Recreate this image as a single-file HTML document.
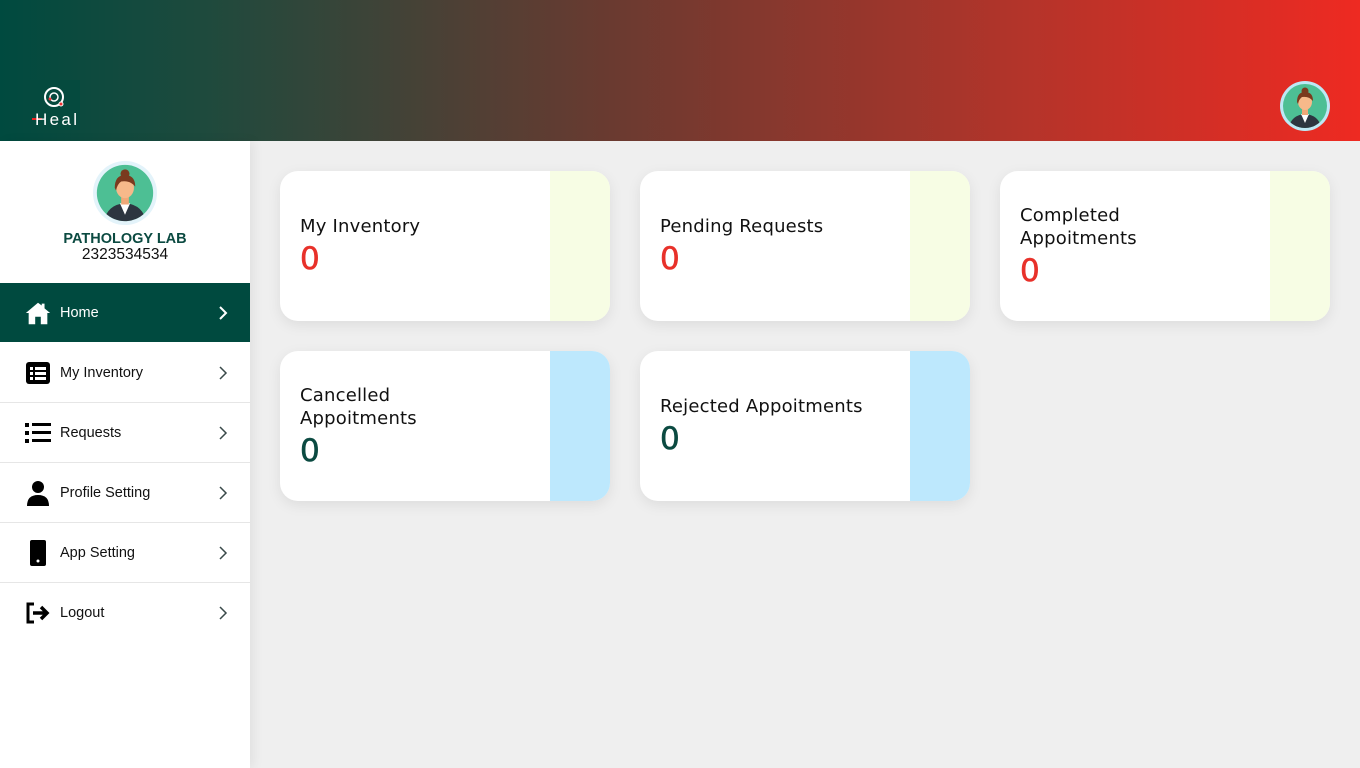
<!DOCTYPE html>
<html><head><meta charset="utf-8"><style>
*{margin:0;padding:0;box-sizing:border-box}
body{width:1360px;height:768px;overflow:hidden;background:#efefef;font-family:"Liberation Sans",sans-serif;position:relative}
.hdr{position:absolute;left:0;top:0;width:1360px;height:141px;background:linear-gradient(90deg,#004a3f 0%,#1e4a3d 15%,#6a3a30 45%,#b3342a 75%,#ee2a22 100%)}
.logo{position:absolute;left:30px;top:80px;width:50px;height:50px;background:#054a3e;color:#fff}
.side{position:absolute;left:0;top:141px;width:250px;height:627px;background:#fff;box-shadow:4px 0 10px rgba(0,0,0,.06)}
.name{position:absolute;top:90px;width:250px;text-align:center;font-weight:bold;color:#0b4a41;font-size:14.5px}
.phone{position:absolute;top:105px;width:250px;text-align:center;color:#111;font-size:15.5px}
.item{position:absolute;left:0;width:250px;height:60px;border-bottom:1px solid #e6e6e6;display:flex;align-items:center;font-size:14.5px;color:#111}
.item .ic{width:28px;height:28px;margin-left:24px;margin-right:8px;display:flex;align-items:center;justify-content:center}
.item .ch{position:absolute;right:22px;top:22px}
.card{position:absolute;width:330px;height:150px;background:#fff;border-radius:18px;overflow:hidden;box-shadow:0 4px 14px rgba(0,0,0,.08)}
.card .bar{position:absolute;right:0;top:0;width:60px;height:150px}
.card .t{position:absolute;left:20px;font-family:"DejaVu Sans",sans-serif;font-size:18px;color:#111;line-height:23px;width:240px;letter-spacing:0.2px}
.card .n{position:absolute;left:20px;font-family:"DejaVu Sans",sans-serif;font-size:31px;font-weight:normal;-webkit-text-stroke:0.6px}
</style></head><body>
<div class="hdr">
 <div class="logo">
  <svg width="50" height="50" viewBox="0 0 50 50"><circle cx="24" cy="17" r="9" fill="none" stroke="#fff" stroke-width="2"/><circle cx="24" cy="17" r="4" fill="none" stroke="#fff" stroke-width="1.5"/><circle cx="20" cy="19" r="1.5" fill="#e33"/><circle cx="31" cy="24" r="2" fill="#e33" stroke="#fff"/>
  <line x1="2" y1="39" x2="12" y2="39" stroke="#e22" stroke-width="2"/>
  <text x="5" y="45" font-family="Liberation Sans" font-size="17" fill="#fff" textLength="42">Heal</text></svg>
 </div>
 <svg style="position:absolute;left:1280px;top:81px" width="50" height="50" viewBox="0 0 50 50"><defs><clipPath id="c1"><circle cx="25" cy="25" r="22"/></clipPath></defs><circle cx="25" cy="25" r="25" fill="#bde8f5"/><circle cx="25" cy="25" r="22" fill="#4dbf94"/><g clip-path="url(#c1)"><path d="M8 50 Q10 34 25 33 Q40 34 42 50Z" fill="#2d3540"/><path d="M21 33 L25 42 L29 33Z" fill="#fff"/><rect x="22" y="26" width="6" height="8" fill="#f0a878"/><ellipse cx="25" cy="21" rx="7" ry="8" fill="#f6b98a"/><path d="M17 21 Q17 11 25 11 Q33 11 33 20 Q29 15 22 16 Q19 18 18 23Z" fill="#7a3a1e"/><circle cx="25" cy="10" r="3.5" fill="#7a3a1e"/></g></svg>
</div>
<div class="side">
 <svg style="position:absolute;left:93px;top:20px" width="64" height="64" viewBox="0 0 50 50"><defs><clipPath id="c2"><circle cx="25" cy="25" r="22"/></clipPath></defs><circle cx="25" cy="25" r="25" fill="#e3f3fa"/><circle cx="25" cy="25" r="22" fill="#4dbf94"/><g clip-path="url(#c2)"><path d="M8 50 Q10 34 25 33 Q40 34 42 50Z" fill="#2d3540"/><path d="M21 33 L25 42 L29 33Z" fill="#fff"/><rect x="22" y="26" width="6" height="8" fill="#f0a878"/><ellipse cx="25" cy="21" rx="7" ry="8" fill="#f6b98a"/><path d="M17 21 Q17 11 25 11 Q33 11 33 20 Q29 15 22 16 Q19 18 18 23Z" fill="#7a3a1e"/><circle cx="25" cy="10" r="3.5" fill="#7a3a1e"/></g></svg>
 <div class="name">PATHOLOGY LAB</div>
 <div class="phone">2323534534</div>
 <div class="item" style="top:142px;height:59px;background:#004a3f;color:#fff;border:none">
  <div class="ic"><svg width="30" height="26" viewBox="0 0 30 26"><path d="M15 2 L2 13 L5 13 L5 25 L12 25 L12 17 L18 17 L18 25 L25 25 L25 13 L28 13 L22 8 L22 3 L19 3 L19 5Z" fill="#fff"/></svg></div>Home
  <svg class="ch" width="10" height="16" viewBox="0 0 10 16"><path d="M2 2 L8 8 L2 14" fill="none" stroke="#fff" stroke-width="2"/></svg></div>
 <div class="item" style="top:202px">
  <div class="ic"><svg width="26" height="24" viewBox="0 0 26 24"><rect x="1" y="1" width="24" height="22" rx="3" fill="#000"/><rect x="5" y="6" width="3" height="3" fill="#fff"/><rect x="10" y="6" width="11" height="3" fill="#fff"/><rect x="5" y="11" width="3" height="3" fill="#fff"/><rect x="10" y="11" width="11" height="3" fill="#fff"/><rect x="5" y="16" width="3" height="3" fill="#fff"/><rect x="10" y="16" width="11" height="3" fill="#fff"/></svg></div>My Inventory
  <svg class="ch" width="10" height="16" viewBox="0 0 10 16"><path d="M2 2 L8 8 L2 14" fill="none" stroke="#3a4a4a" stroke-width="1.5"/></svg></div>
 <div class="item" style="top:262px">
  <div class="ic"><svg width="26" height="22" viewBox="0 0 26 22"><rect x="0" y="1" width="4" height="4" fill="#000"/><rect x="7" y="1" width="19" height="3" fill="#000"/><rect x="0" y="9" width="4" height="4" fill="#000"/><rect x="7" y="9" width="19" height="3" fill="#000"/><rect x="0" y="17" width="4" height="4" fill="#000"/><rect x="7" y="17" width="19" height="3" fill="#000"/></svg></div>Requests
  <svg class="ch" width="10" height="16" viewBox="0 0 10 16"><path d="M2 2 L8 8 L2 14" fill="none" stroke="#3a4a4a" stroke-width="1.5"/></svg></div>
 <div class="item" style="top:322px">
  <div class="ic"><svg width="24" height="26" viewBox="0 0 24 26"><circle cx="12" cy="7" r="6" fill="#000"/><path d="M1 26 Q1 15 12 15 Q23 15 23 26Z" fill="#000"/></svg></div>Profile Setting
  <svg class="ch" width="10" height="16" viewBox="0 0 10 16"><path d="M2 2 L8 8 L2 14" fill="none" stroke="#3a4a4a" stroke-width="1.5"/></svg></div>
 <div class="item" style="top:382px">
  <div class="ic"><svg width="18" height="26" viewBox="0 0 18 26"><rect x="1" y="0" width="16" height="26" rx="2" fill="#000"/><circle cx="9" cy="21" r="1.5" fill="#fff"/></svg></div>App Setting
  <svg class="ch" width="10" height="16" viewBox="0 0 10 16"><path d="M2 2 L8 8 L2 14" fill="none" stroke="#3a4a4a" stroke-width="1.5"/></svg></div>
 <div class="item" style="top:442px;border:none">
  <div class="ic"><svg width="26" height="22" viewBox="0 0 26 22"><path d="M9 2 H3 V20 H9" fill="none" stroke="#000" stroke-width="3"/><path d="M8 11 H22 M16 5 L22 11 L16 17" fill="none" stroke="#000" stroke-width="3.5"/></svg></div>Logout
  <svg class="ch" width="10" height="16" viewBox="0 0 10 16"><path d="M2 2 L8 8 L2 14" fill="none" stroke="#3a4a4a" stroke-width="1.5"/></svg></div>
</div>
<div class="card" style="left:280px;top:171px"><div class="bar" style="background:#f7fde4"></div><div class="t" style="top:44px">My Inventory</div><div class="n" style="top:70px;color:#e8312a">0</div></div>
<div class="card" style="left:640px;top:171px"><div class="bar" style="background:#f7fde4"></div><div class="t" style="top:44px">Pending Requests</div><div class="n" style="top:70px;color:#e8312a">0</div></div>
<div class="card" style="left:1000px;top:171px"><div class="bar" style="background:#f7fde4"></div><div class="t" style="top:33px">Completed<br>Appoitments</div><div class="n" style="top:82px;color:#e8312a">0</div></div>
<div class="card" style="left:280px;top:351px"><div class="bar" style="background:#bde8fd"></div><div class="t" style="top:33px">Cancelled<br>Appoitments</div><div class="n" style="top:82px;color:#0b4a41">0</div></div>
<div class="card" style="left:640px;top:351px"><div class="bar" style="background:#bde8fd"></div><div class="t" style="top:44px">Rejected Appoitments</div><div class="n" style="top:70px;color:#0b4a41">0</div></div>
</body></html>
